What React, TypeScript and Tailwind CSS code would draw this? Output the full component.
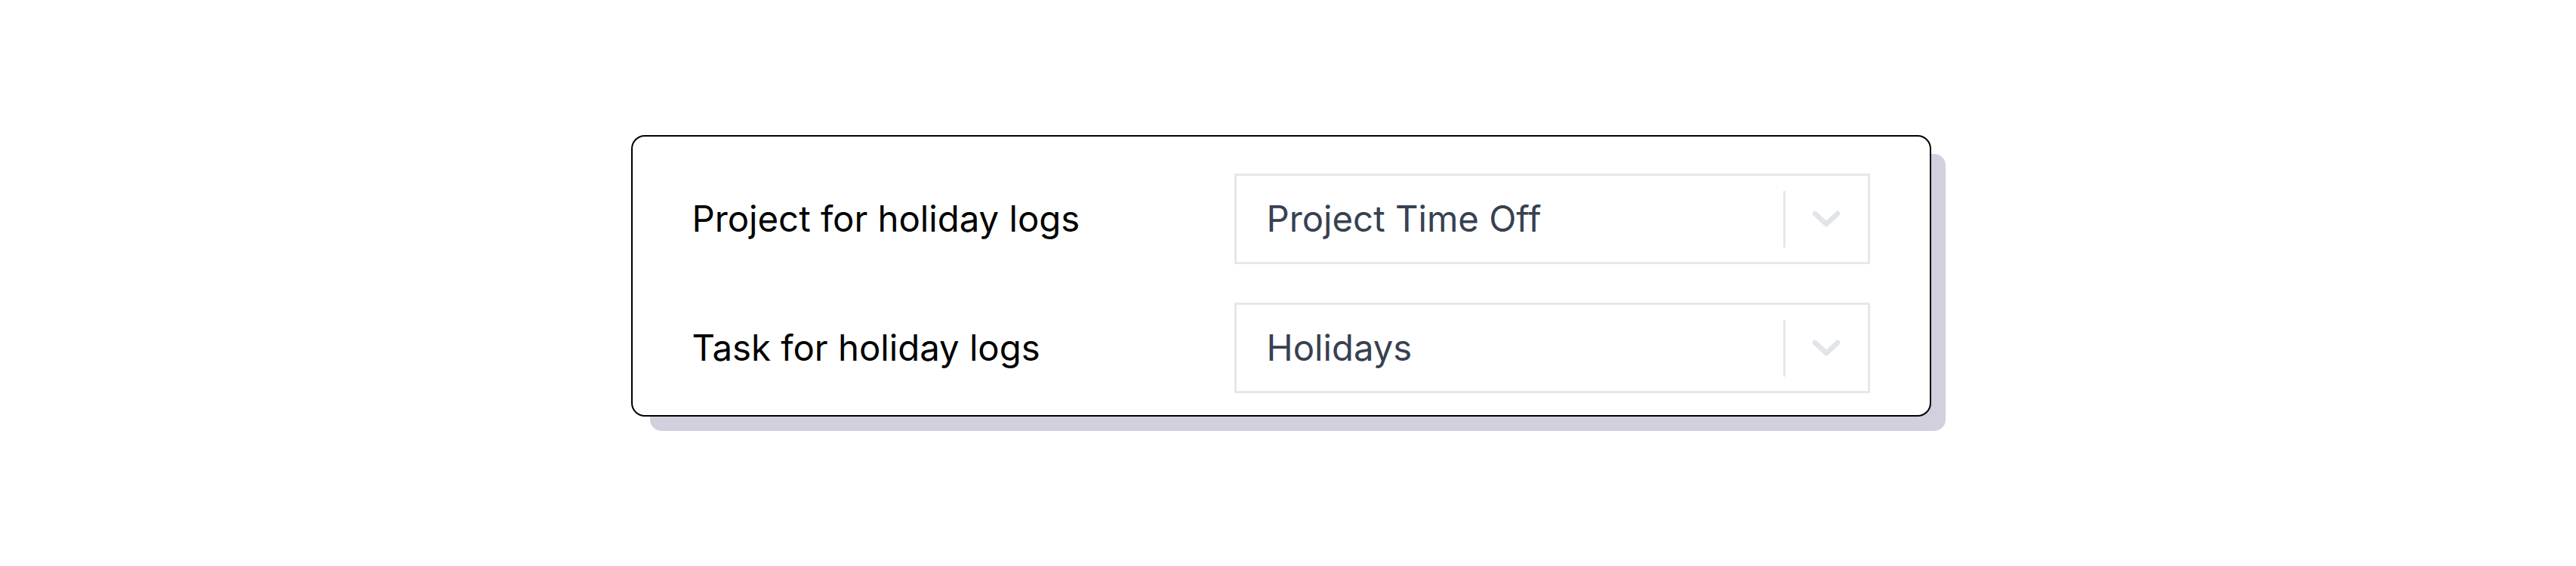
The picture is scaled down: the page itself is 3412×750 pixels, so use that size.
import React from "react";

const ROWS = [
    {label: "Project for holiday logs", value: "Project Time Off"},
    {label: "Task for holiday logs", value: "Holidays"},
]

const Chevron = () => (
    <svg width="40" height="26" viewBox="0 0 40 26" fill="none">
        <path d="M5 5 L20 19 L35 5" stroke="#e1e4e8" strokeWidth="6.5" strokeLinecap="round" strokeLinejoin="round"/>
    </svg>
)

const SelectBox = ({value}: {value: string}) => (
    <div className="flex h-[120px] w-[842px] items-center border-[3px] border-[#e5e7eb] bg-white">
        <span className="flex-1 pl-10 text-[47.3px] leading-none text-[#374151]">{value}</span>
        <div className="h-[75px] w-[3px] bg-[#e5e7eb]"></div>
        <div className="flex w-[109px] items-center justify-center pt-[2px]">
            <Chevron/>
        </div>
    </div>
)

export default function App() {
    return (
        <div className="min-h-[750px] w-full bg-white" style={{fontFamily: "Inter, 'Noto Sans', sans-serif"}}>
            <div className="mx-auto w-[1741px] pt-[179px]">
                <div className="flex w-[1722px] flex-col gap-[51px] rounded-[18px] border-2 border-black bg-white pb-[29px] pl-[79px] pr-[79px] pt-[49px] shadow-[22px_22px_0_-3px_#d1d0dc]">
                    {ROWS.map((row, index) => (
                        <div key={index} className="flex items-center justify-between">
                            <span className="text-[47.3px] leading-none text-black">{row.label}</span>
                            <SelectBox value={row.value}/>
                        </div>
                    ))}
                </div>
            </div>
        </div>
    )
}
